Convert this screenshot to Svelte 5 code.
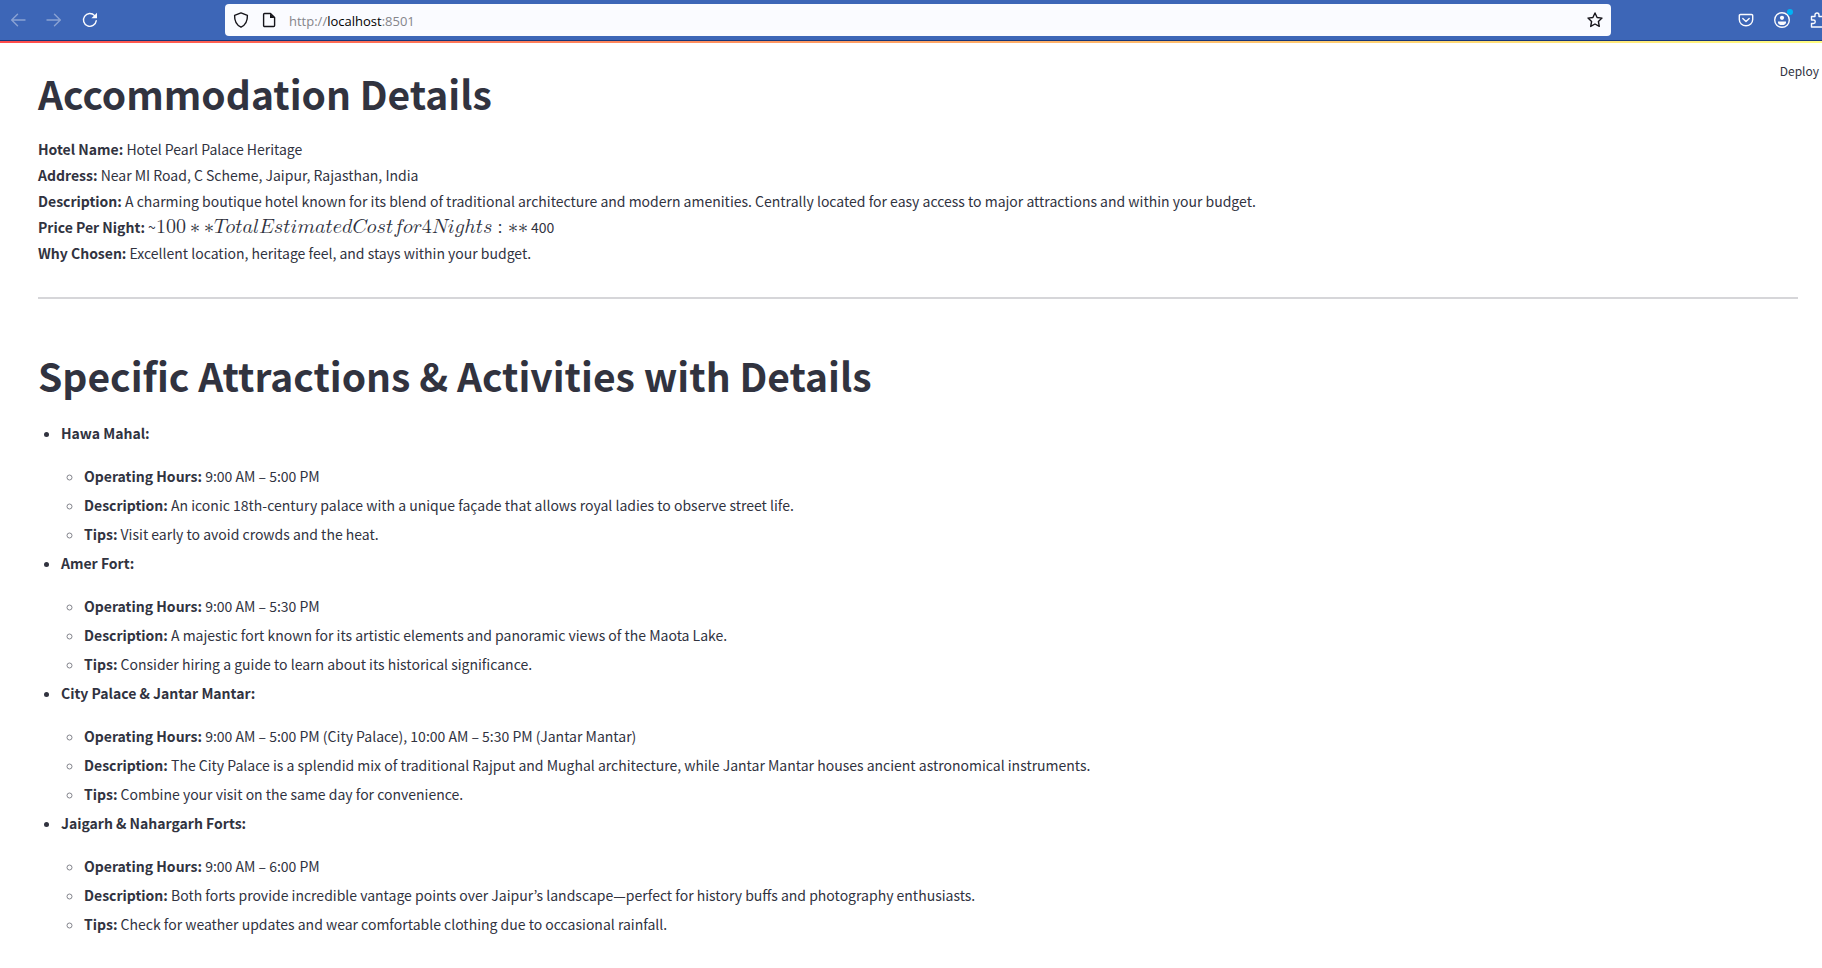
<script>
  const hotel = [
    ['Hotel Name:', 'Hotel Pearl Palace Heritage'],
    ['Address:', 'Near MI Road, C Scheme, Jaipur, Rajasthan, India'],
    ['Description:', 'A charming boutique hotel known for its blend of traditional architecture and modern amenities. Centrally located for easy access to major attractions and within your budget.']
  ];

  const attractions = [
    {
      name: 'Hawa Mahal:',
      hours: '9:00 AM – 5:00 PM',
      description: 'An iconic 18th-century palace with a unique façade that allows royal ladies to observe street life.',
      tips: 'Visit early to avoid crowds and the heat.'
    },
    {
      name: 'Amer Fort:',
      hours: '9:00 AM – 5:30 PM',
      description: 'A majestic fort known for its artistic elements and panoramic views of the Maota Lake.',
      tips: 'Consider hiring a guide to learn about its historical significance.'
    },
    {
      name: 'City Palace & Jantar Mantar:',
      hours: '9:00 AM – 5:00 PM (City Palace), 10:00 AM – 5:30 PM (Jantar Mantar)',
      description: 'The City Palace is a splendid mix of traditional Rajput and Mughal architecture, while Jantar Mantar houses ancient astronomical instruments.',
      tips: 'Combine your visit on the same day for convenience.'
    },
    {
      name: 'Jaigarh & Nahargarh Forts:',
      hours: '9:00 AM – 6:00 PM',
      description: 'Both forts provide incredible vantage points over Jaipur’s landscape—perfect for history buffs and photography enthusiasts.',
      tips: 'Check for weather updates and wear comfortable clothing due to occasional rainfall.'
    }
  ];
</script>

<header class="browser">
  <nav class="history">
    <button class="icon faded" aria-label="Back">
      <svg viewBox="0 0 16 16"><path d="M15 8H1.8M7.5 2.2 1.7 8l5.8 5.8" /></svg>
    </button>
    <button class="icon faded" aria-label="Forward">
      <svg viewBox="0 0 16 16"><path d="M1 8h13.2M8.5 2.2 14.3 8l-5.8 5.8" /></svg>
    </button>
    <button class="icon" aria-label="Reload">
      <svg viewBox="0 0 16 16"><path d="M14.2 8.8A6.4 6.4 0 1 1 12.6 3.6" /><path class="solid" d="M15 .8v5.4H9.4z" /></svg>
    </button>
  </nav>

  <div class="address">
    <button class="icon dark" aria-label="Tracking protection">
      <svg viewBox="0 0 16 16"><path d="M8 .9 14.4 3.4c.2 5.3-1.7 9.6-6.4 11.8C3.3 13 1.4 8.700 1.600 3.400z" /></svg>
    </button>
    <button class="icon dark" aria-label="Site information">
      <svg viewBox="0 0 16 16"><path d="M3.600 1.500H9.500L13.600 5.500V13.500a1 1 0 0 1-1 1H3.600a1 1 0 0 1-1-1V2.500a1 1 0 0 1 1-1z" /><path class="solid" d="M9 1.500V6h4.600z" /></svg>
    </button>
    <a class="url" href="http://localhost:8501">http://<b>localhost</b>:8501</a>
    <button class="icon dark" aria-label="Bookmark">
      <svg viewBox="0 0 16 16"><path d="m8 1 2.100 4.500 4.900.6-3.600 3.400.9 4.900L8 12l-4.300 2.400.9-4.900L1 6.100l4.900-.6z" /></svg>
    </button>
  </div>

  <div class="tools">
    <button class="icon" aria-label="Save to Pocket">
      <svg viewBox="0 0 16 16"><path d="M2.500 2.500h11a1.200 1.200 0 0 1 1.200 1.200V7.500a6.700 6.300 0 0 1-13.400 0V3.700a1.200 1.200 0 0 1 1.200-1.200z" /><path d="M4.800 6.500 8 9.500l3.200-3" /></svg>
    </button>
    <button class="icon account" aria-label="Account">
      <svg viewBox="0 0 16 16"><circle cx="8" cy="8" r="7.300" /><circle class="solid" cx="8" cy="5.800" r="2.100" /><path class="solid" d="M4 9.500h8v.8a4 2.800 0 0 1-8 0z" /></svg>
      <span class="dot"></span>
    </button>
    <button class="icon" aria-label="Extensions">
      <svg viewBox="0 0 16 16"><path d="M1.500 4.500H5V3a2 2 0 0 1 4 0v1.500h4.500V8H15v4h-1.500v3H1.500v-3.500h2a1.600 1.600 0 0 0 0-3.500h-2z" /></svg>
    </button>
  </div>
</header>
<div class="decoration"></div>

<div class="toolbar"><button class="deploy">Deploy</button></div>

<main>
  <h1>Accommodation Details</h1>
  <p>
    {#each hotel as [label, value]}
      <strong>{label}</strong> {value}<br />
    {/each}
    <strong>Price Per Night:</strong> ~<math>
      <mn>100</mn><mo lspace="4px" rspace="4px">∗</mo><mo lspace="0" rspace="0">∗</mo>
      {#each 'TotalEstimatedCostfor' as letter}<mi>{letter}</mi>{/each}
      <mn>4</mn>
      {#each 'Nights' as letter}<mi>{letter}</mi>{/each}
      <mo lspace="5px" rspace="5px">:</mo><mo lspace="0" rspace="0">∗</mo><mo lspace="0" rspace="0">∗</mo>
    </math> 400<br />
    <strong>Why Chosen:</strong> Excellent location, heritage feel, and stays within your budget.
  </p>
  <hr />
  <h1>Specific Attractions &amp; Activities with Details</h1>
  <ul>
    {#each attractions as place}
      <li>
        <strong>{place.name}</strong>
        <ul>
          <li><strong>Operating Hours:</strong> {place.hours}</li>
          <li><strong>Description:</strong> {place.description}</li>
          <li><strong>Tips:</strong> {place.tips}</li>
        </ul>
      </li>
    {/each}
  </ul>
</main>

<style>
  :global(body) {
    background: #fff;
    color: #31333f;
    font-family: "Noto Sans CJK KR", "Noto Sans", sans-serif;
    font-size: 14px;
    line-height: 26px;
    overflow: hidden;
  }
  button {
    font: inherit;
    color: inherit;
    background: none;
    border: 0;
    padding: 0;
  }
  .browser {
    display: flex;
    align-items: center;
    height: 40px;
    background: #3d66b7;
    border-bottom: 1px solid #17367a;
    color: #fbfbfe;
    overflow: hidden;
  }
  .history {
    display: flex;
    gap: 20px;
    padding-left: 10px;
    width: 215px;
  }
  .icon {
    display: flex;
    flex: none;
    position: relative;
  }
  .icon svg {
    width: 16px;
    height: 16px;
    fill: none;
    stroke: currentColor;
    stroke-width: 1.4;
    stroke-linejoin: round;
    stroke-linecap: round;
  }
  .icon .solid {
    fill: currentColor;
    stroke: none;
  }
  .faded {
    opacity: 0.4;
  }
  .dark {
    color: #15141a;
  }
  .address {
    flex: 1;
    display: flex;
    align-items: center;
    gap: 12px;
    height: 32px;
    padding: 0 8px;
    border-radius: 4px;
    background: #fafbff;
  }
  .url {
    flex: 1;
    padding-top: 2px;
    font: 13px/20px "Open Sans", "Noto Sans", sans-serif;
    color: #85858a;
    text-decoration: none;
  }
  .url b {
    font-weight: 400;
    color: #000;
  }
  .tools {
    display: flex;
    gap: 20px;
    width: 84px;
    padding-left: 127px;
  }
  .dot {
    position: absolute;
    top: -3px;
    right: -3px;
    width: 6px;
    height: 6px;
    border-radius: 50%;
    background: #00b3f4;
  }
  .decoration {
    height: 2px;
    background: linear-gradient(90deg, #ff4b4b, #fffd80);
  }
  .toolbar {
    display: flex;
    justify-content: flex-end;
    height: 24px;
    padding: 16px 3px 0 0;
    margin-bottom: -16px;
  }
  .deploy {
    font-size: 12px;
    line-height: 24px;
  }
  main {
    padding: 0 24px 24px 38px;
  }
  h1 {
    margin: 0 0 16px;
    font-size: 39px;
    line-height: 53px;
    font-weight: 700;
  }
  p {
    margin: 0;
  }
  strong {
    font-weight: 600;
  }
  math {
    font-family: "Latin Modern Math", "DejaVu Math TeX Gyre", "Liberation Serif", math;
    font-size: 20px;
    line-height: 1;
  }
  hr {
    height: 2px;
    margin: 31px 0 50px;
    border: 0;
    background: #d6d6d9;
  }
  ul {
    margin: 0;
    padding-left: 23px;
  }
  li {
    margin-top: 3px;
  }
  main > ul {
    margin-top: 18px;
  }
  li ul {
    margin-top: 17px;
  }
  li li::marker {
    color: #83848c;
  }
</style>
